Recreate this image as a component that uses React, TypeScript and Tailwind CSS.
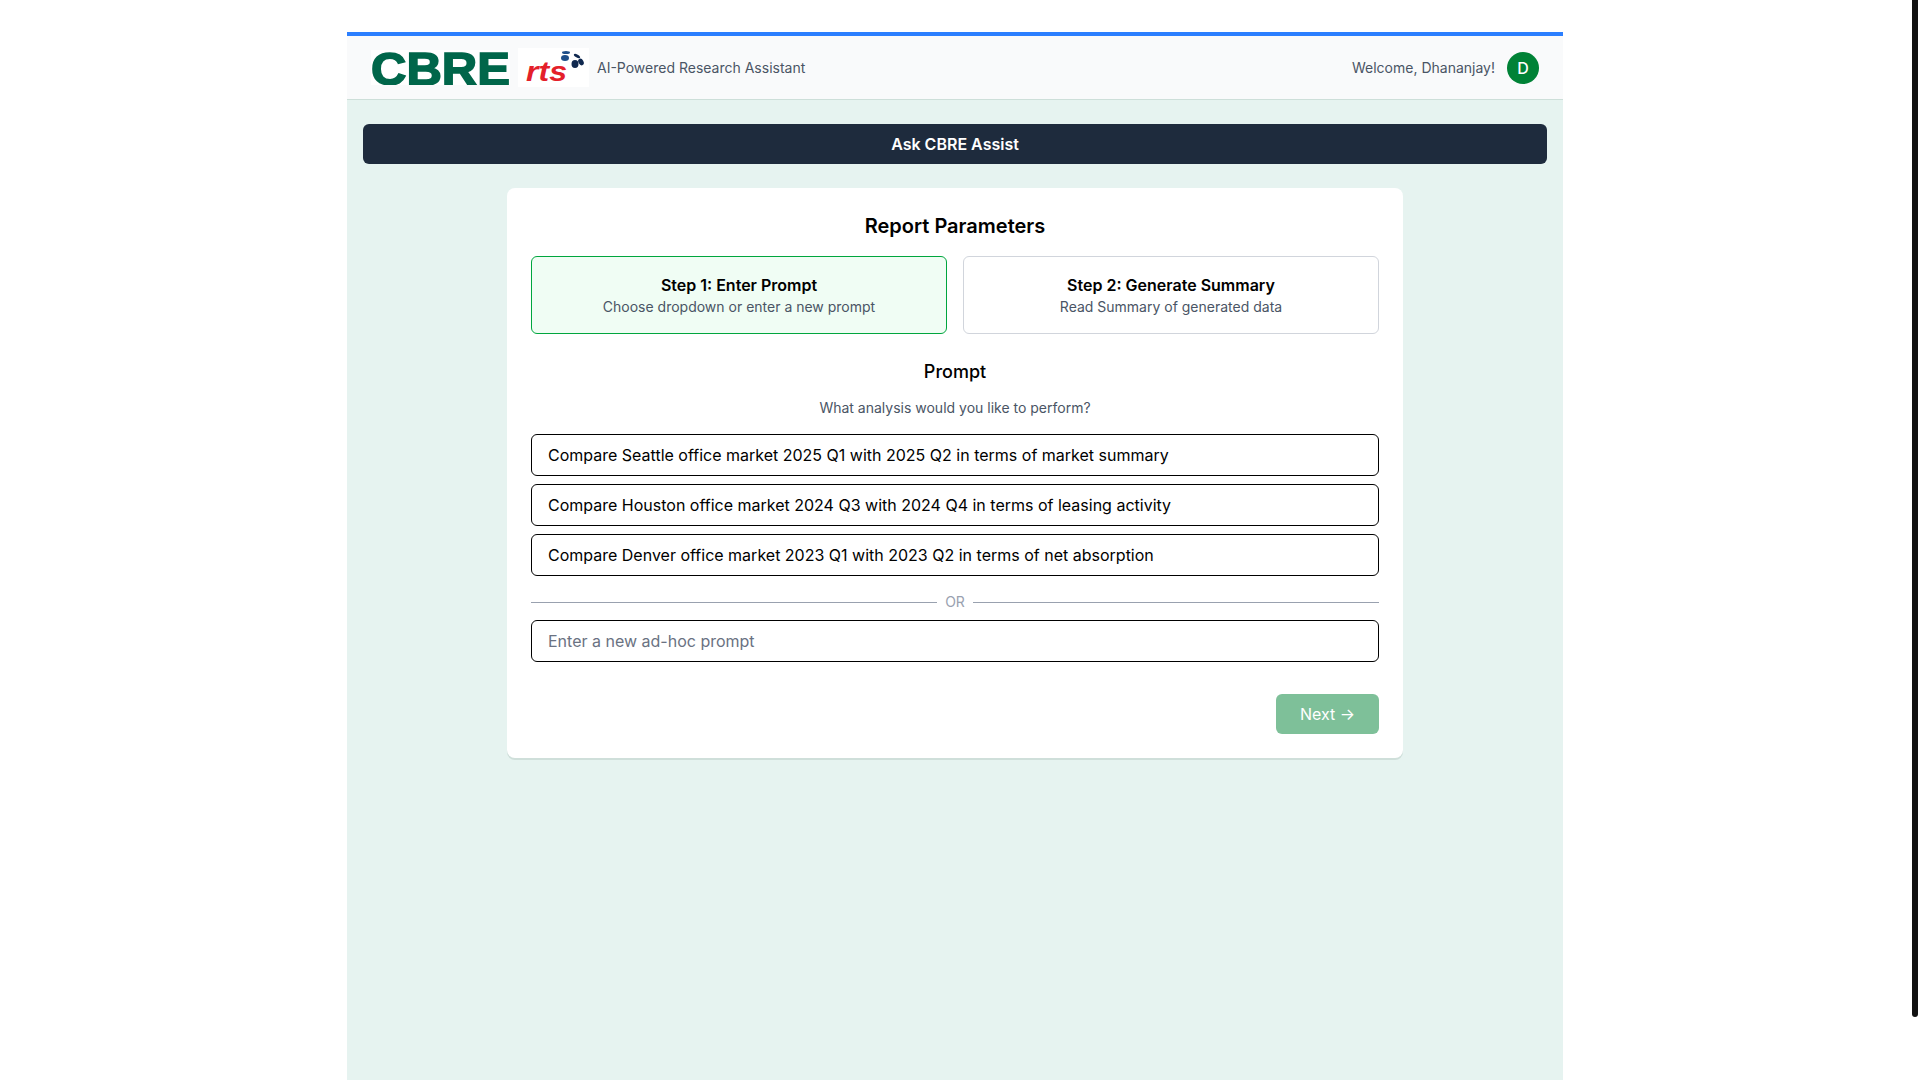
import React from 'react';

const prompts = [
  'Compare Seattle office market 2025 Q1 with 2025 Q2 in terms of market summary',
  'Compare Houston office market 2024 Q3 with 2024 Q4 in terms of leasing activity',
  'Compare Denver office market 2023 Q1 with 2023 Q2 in terms of net absorption',
];

const CbreLogo: React.FC = () => (
  <svg width="139" height="35" viewBox="0 0 139 35" className="bg-white shrink-0">
    <text
      x="0"
      y="34.5"
      textLength="139"
      lengthAdjust="spacingAndGlyphs"
      fontSize="47"
      strokeWidth="1.6"
      className="font-['Liberation_Sans',sans-serif] font-bold fill-[#00664a] stroke-[#00664a]"
    >
      CBRE
    </text>
  </svg>
);

const RtsLogo: React.FC = () => (
  <svg width="71" height="39" viewBox="0 0 71 39" className="bg-white shrink-0">
    <text
      x="8"
      y="33"
      textLength="41"
      lengthAdjust="spacingAndGlyphs"
      fontSize="28"
      className="font-['Liberation_Sans',sans-serif] font-bold italic fill-[#e4202a]"
    >
      rts
    </text>
    <ellipse cx="47" cy="10" rx="4" ry="3" fill="#1d4e89" />
    <ellipse cx="48" cy="4.5" rx="4" ry="1.5" fill="#1d4e89" />
    <ellipse cx="57" cy="16" rx="3.5" ry="4" fill="#10284f" />
    <ellipse cx="63" cy="14" rx="2.5" ry="3.5" fill="#10284f" transform="rotate(-30 63 14)" />
    <ellipse cx="59" cy="8" rx="3.5" ry="1.5" fill="#10284f" transform="rotate(30 59 8)" />
  </svg>
);

const StepCard: React.FC<{ title: string; sub: string; active?: boolean }> = ({ title, sub, active }) => (
  <div className={`flex flex-col items-center justify-center h-[78px] rounded-md border ${active ? 'border-green-600 bg-green-50' : 'border-gray-300 bg-white'}`}>
    <div className="text-base font-semibold leading-6 text-black">{title}</div>
    <div className="text-sm leading-5 text-gray-600">{sub}</div>
  </div>
);

const App: React.FC = () => {
  return (
    <div className="flex h-screen overflow-hidden bg-white font-['Inter',sans-serif]">
      <div className="flex-1 min-w-0 pt-8">
        <div className="mx-auto flex h-full w-[1216px] flex-col border-t-4 border-blue-500 bg-[#e6f3f0]">
          <header className="flex h-[64px] items-center justify-between border-b border-[#cddfd9] bg-gray-50 px-6">
            <div className="flex items-center gap-2">
              <CbreLogo />
              <RtsLogo />
              <span className="text-sm text-gray-600">AI-Powered Research Assistant</span>
            </div>
            <div className="flex items-center gap-3">
              <span className="text-sm text-gray-600">Welcome, Dhananjay!</span>
              <div className="flex h-8 w-8 items-center justify-center rounded-full bg-green-700 text-base font-medium text-white">D</div>
            </div>
          </header>
          <main className="flex flex-col items-center px-4 pt-6">
            <div className="flex h-10 w-full items-center justify-center rounded-md bg-[#1e2b3d] text-base font-semibold text-white">
              Ask CBRE Assist
            </div>
            <div className="mt-6 w-[896px] rounded-lg bg-white p-6 shadow-[0_2px_0_#cfdfda]">
              <h2 className="text-center text-xl font-semibold leading-[28px] text-black">Report Parameters</h2>
              <div className="mt-4 grid grid-cols-2 gap-4">
                <StepCard active title="Step 1: Enter Prompt" sub="Choose dropdown or enter a new prompt" />
                <StepCard title="Step 2: Generate Summary" sub="Read Summary of generated data" />
              </div>
              <h3 className="mt-6 text-center text-lg font-medium leading-7 text-black">Prompt</h3>
              <p className="mt-3 text-center text-sm leading-5 text-gray-600">What analysis would you like to perform?</p>
              <div className="mt-4 flex flex-col gap-2">
                {prompts.map((p) => (
                  <button key={p} type="button" className="h-[42px] rounded-md border border-black bg-white px-4 text-left text-base text-black">
                    {p}
                  </button>
                ))}
              </div>
              <div className="mt-4 flex h-[20px] items-center gap-2 my-0">
                <div className="h-px flex-1 bg-gray-400" />
                <span className="px-0 text-sm text-gray-400">OR</span>
                <div className="h-px flex-1 bg-gray-400" />
              </div>
              <input
                readOnly
                placeholder="Enter a new ad-hoc prompt"
                className="mt-2 block h-[42px] w-full rounded-md border border-black bg-white px-4 text-base outline-none placeholder:text-gray-500"
              />
              <div className="mt-8 flex justify-end">
                <button type="button" className="h-10 w-[103px] rounded-md bg-green-700 text-base text-white opacity-50">
                  Next →
                </button>
              </div>
            </div>
          </main>
        </div>
      </div>
      <div className="w-[10px] shrink-0 px-[2px]">
        <div className="h-[1017px] w-[6px] rounded-b-sm bg-[#111111]" />
      </div>
    </div>
  );
};

export default App;
